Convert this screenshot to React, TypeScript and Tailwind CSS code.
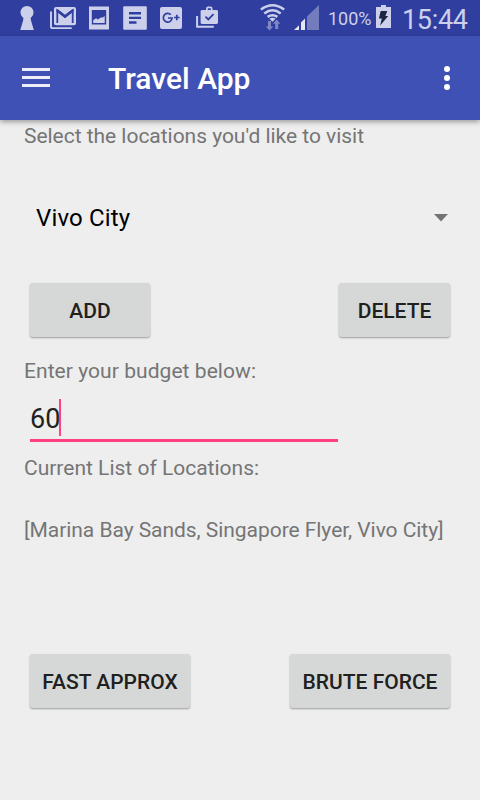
import React, { useState } from 'react';

const LIGHT = '#ccd0eb';
const DARK = '#303f9f';

function StatusBar() {
  return (
    <div className="flex h-9 items-start bg-[#303f9f] text-[#ccd0eb]">
      <svg className="ml-5 shrink-0" width="14" height="36" viewBox="20 0 14 36" fill={LIGHT}>
        <circle cx="27" cy="12.4" r="6.5" />
        <path d="M23.6 16h6.8l.6 4.5 2.8 9.4H20.3l2.8-9.4z" />
      </svg>
      <svg className="ml-4 shrink-0" width="26" height="36" viewBox="50 0 26 36">
        <path d="M51 11.5V26.5a1.6 1.6 0 0 0 1.6 1.6H71.7" fill="none" stroke={LIGHT} strokeWidth="1.9" />
        <rect x="54" y="7" width="22" height="18.3" rx="2" fill={LIGHT} />
        <path d="M57.3 23V10.3L65 16.7l7.7-6.4V23" fill="none" stroke={DARK} strokeWidth="1.8" />
        <path d="M56.4 9.4h1.7L65 14.8l6.9-5.4h1.7v2.2L65 18.2l-8.6-6.6z" fill={DARK} />
      </svg>
      <svg className="ml-[13px] shrink-0" width="20" height="36" viewBox="89 0 20 36">
        <path fillRule="evenodd" d="M89 6.6h20v23H89zM91.8 10v14.6h14.4V10z" fill={LIGHT} />
        <path d="M93.2 23v-2.8l2.8-2 2 1.2 3.2-2.2 1.2.5 2.3-1.7v7z" fill={LIGHT} />
      </svg>
      <svg className="ml-3.5 shrink-0" width="24" height="36" viewBox="123 0 24 36">
        <rect x="123.2" y="6.3" width="23.6" height="23.4" rx="1" fill={LIGHT} />
        <path d="M129 12h12v2.4h-12zM129 16.7h12v2.4h-12zM129 21.3h7.5v2.4H129z" fill={DARK} />
      </svg>
      <svg className="ml-[13px] shrink-0" width="22" height="36" viewBox="160 0 22 36">
        <rect x="160" y="7" width="22" height="22" rx="2" fill={LIGHT} />
        <path d="M170.8 14.6a4.4 4.4 0 1 0 1.3 3.4H168M174 17.5h5.6M176.8 14.7v5.6" fill="none" stroke={DARK} strokeWidth="1.7" />
      </svg>
      <svg className="ml-3.5 shrink-0" width="22" height="36" viewBox="196 0 22 36">
        <path d="M197.1 16V26.8H213.8" fill="none" stroke={LIGHT} strokeWidth="2" />
        <rect x="200.6" y="10" width="17.4" height="14" rx="1.4" fill={LIGHT} />
        <path d="M206.9 11V8.6q0-1.2 1.2-1.2h2.4q1.2 0 1.2 1.2V11" fill="none" stroke={LIGHT} strokeWidth="1.7" />
        <path d="M205.4 16.6l2.9 2.8 5.2-5.2" fill="none" stroke={DARK} strokeWidth="1.8" />
      </svg>
      <svg className="ml-[42px] shrink-0" width="26" height="36" viewBox="260 0 26 36">
        <g fill="none" stroke={LIGHT} strokeWidth="2.5">
          <path d="M260.9 9.5q11.6-8.6 23.2 0" />
          <path d="M264.3 13.4q8.2-6.2 16.4 0" />
          <path d="M267.6 16.9q4.9-3.4 9.8 0" />
        </g>
        <path d="M269.4 18.8q3.1-2 6.2 0l-3.1 3z" fill={LIGHT} />
        <path d="M268 21h3v5.4h2.2l-3.7 4.2-3.7-4.2h2.2zM275.2 29v-5.2H273l3.7-4.2 3.7 4.2h-2.2V29z" fill="#7e87c4" />
      </svg>
      <svg className="ml-2 shrink-0" width="25" height="36" viewBox="294 0 25 36">
        <path d="M294 30l5-4.8V30zM301 30v-7.6l4-4V30z" fill="#e4e6f4" />
        <path d="M307 30V16.5L319 5v25z" fill="#737dbd" />
      </svg>
      <span className="ml-[9px] w-[44px] shrink-0 whitespace-nowrap pt-[7px] text-[18px] leading-6">100%</span>
      <svg className="ml-1 shrink-0" width="15" height="36" viewBox="376 0 15 36">
        <path d="M376 7h5V5h5v2h5v21h-15z" fill={LIGHT} />
        <path d="M380.7 11h6.6l-1.9 5h2.8l-8 9.6 1.6-7h-2.9z" fill="#1c2444" />
      </svg>
      <span className="ml-[11px] whitespace-nowrap pt-[4px] text-[27px] leading-8 tracking-[-0.3px]">15:44</span>
    </div>
  );
}

function AppBar() {
  return (
    <header className="relative flex h-[84px] items-center bg-[#3f51b5] pl-[22px] text-white shadow-[0_2px_5px_rgba(0,0,0,0.35)]">
      <button aria-label="Menu" className="mb-px flex flex-col gap-[5px]">
        <span className="h-[3px] w-7 bg-[#eceefa]" />
        <span className="h-[3px] w-7 bg-[#eceefa]" />
        <span className="h-[3px] w-7 bg-[#eceefa]" />
      </button>
      <h1 className="ml-[58px] pt-0.5 text-[30px] font-medium leading-9">Travel App</h1>
      <button aria-label="More options" className="ml-auto mr-[30px] flex flex-col gap-[3px]">
        <span className="size-1.5 rounded-full bg-white" />
        <span className="size-1.5 rounded-full bg-white" />
        <span className="size-1.5 rounded-full bg-white" />
      </button>
    </header>
  );
}

function RaisedButton({ label, className }: { label: string; className: string }) {
  return (
    <button className={`h-[54px] rounded-[3px] bg-[#d6d8d7] pt-0.5 text-[21px] font-medium text-[#1f2020] shadow-[0_1px_2px_rgba(0,0,0,0.35)] ${className}`}>
      {label}
    </button>
  );
}

export default function App() {
  const [budget] = useState('60');
  return (
    <div className="h-[800px] w-[480px] overflow-hidden bg-[#eeeeee] font-['Roboto',sans-serif] text-[#757575]">
      <StatusBar />
      <AppBar />
      <main className="text-[21px] leading-[28px]">
        <p className="ml-6 mt-[2px] tracking-[-0.03px]">Select the locations you'd like to visit</p>
        <div className="mt-[50px] flex h-9 items-center justify-between pl-9 pr-8 text-[24px] tracking-[0.15px] text-black">
          <span>Vivo City</span>
          <svg className="mb-px" width="14" height="8" viewBox="0 0 14 8"><path d="M0 0h14L7 7.5z" fill="#737373" /></svg>
        </div>
        <div className="mt-[47px] flex justify-between pl-[30px] pr-[30px]">
          <RaisedButton label="ADD" className="w-[120px]" />
          <RaisedButton label="DELETE" className="w-[111px]" />
        </div>
        <p className="ml-6 mt-5 tracking-[0.06px]">Enter your budget below:</p>
        <div className="ml-[30px] mt-[14px] flex h-[43px] w-[308px] border-b-[3px] border-[#ff4081] text-[27px] leading-[41px] text-[#212121]">
          <span>{budget}</span>
          <span className="-ml-px h-[37px] w-[2px] bg-[#ff4081]" />
        </div>
        <p className="ml-6 mt-3">Current List of Locations:</p>
        <p className="ml-6 mt-[34px] whitespace-nowrap tracking-[-0.05px]">[Marina Bay Sands, Singapore Flyer, Vivo City]</p>
        <div className="mt-[110px] flex justify-between px-[30px]">
          <RaisedButton label="FAST APPROX" className="w-[160px]" />
          <RaisedButton label="BRUTE FORCE" className="w-[160px]" />
        </div>
      </main>
    </div>
  );
}
